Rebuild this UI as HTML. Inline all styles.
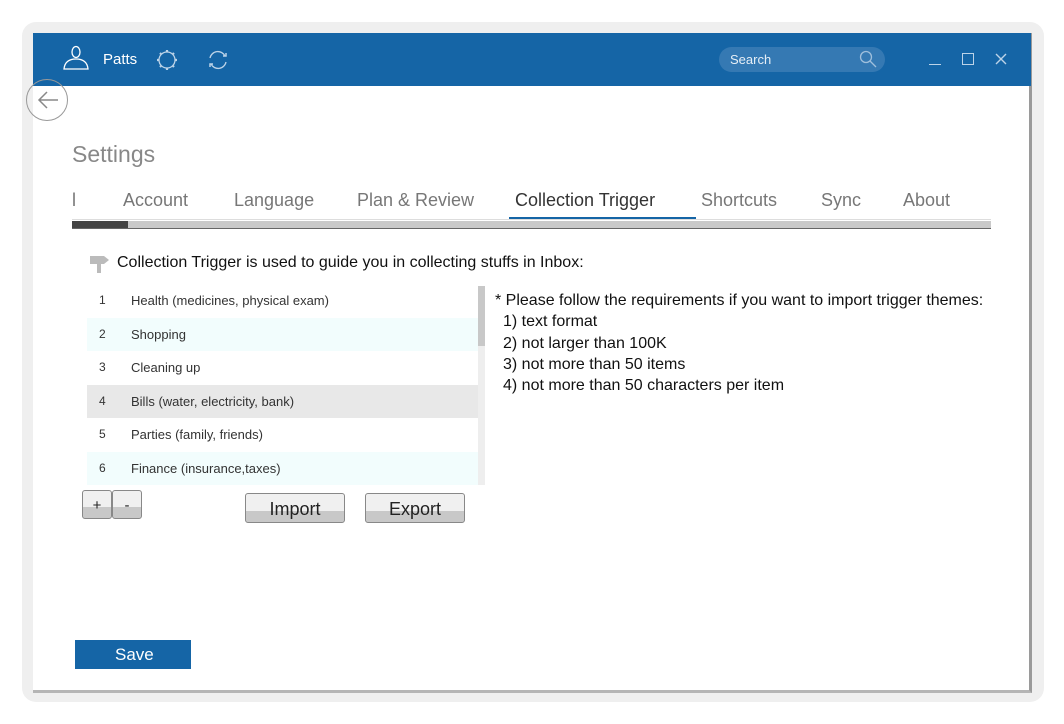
<!DOCTYPE html>
<html><head><style>
body{margin:0;width:1064px;height:724px;background:#fff;position:relative;overflow:hidden;font-family:"Liberation Sans",sans-serif}
.a{position:absolute}
.shadow{left:22px;top:22px;width:1022px;height:680px;background:#efefef;border-radius:14px}
.win{left:33px;top:33px;width:996px;height:657px;background:#fff;border-right:3px solid #9a9a9a;border-bottom:3px solid #b5b5b5}
.hdr{left:33px;top:33px;width:998px;height:53px;background:#1565a6}
.tab{font-size:18px;color:#777;top:190px}
.row{left:87px;width:391px;height:33px;font-size:13px;color:#333}
.row span{position:absolute;top:9px}
.row .n{left:12px;font-size:12px}
.row .t{left:44px}
.btn{border:1px solid #888;border-radius:3px;background:linear-gradient(#f0f0f0 0,#f0f0f0 60%,#c8c8c8 60%);text-align:center;font-size:18px;color:#222}
.req{left:495px;font-size:16px;color:#111}
</style></head><body>
<div class="a shadow"></div>
<div class="a win"></div>
<div class="a hdr"></div>
<svg class="a" style="left:60px;top:44px" width="30" height="28" viewBox="0 0 30 28" fill="none" stroke="#fff" stroke-width="1.3"><ellipse cx="16" cy="8" rx="4" ry="5.5"/><path d="M4 25 Q5 15 16 15 Q27 15 28 25 Z"/></svg>
<div class="a" style="left:103px;top:51px;color:#fff;font-size:15px">Patts</div>
<svg class="a" style="left:154px;top:47px" width="26" height="26" viewBox="0 0 26 26" fill="none" stroke="#bcd3e8" stroke-width="1.3"><circle cx="13" cy="13" r="8"/><g stroke-width="2.2"><path d="M13 3v2M13 21v2M3 13h2M21 13h2M6 6l1 1M19 19l1 1M6 20l1-1M19 7l1-1"/></g></svg>
<svg class="a" style="left:205px;top:47px" width="26" height="26" viewBox="0 0 26 26" fill="none" stroke="#bcd3e8" stroke-width="1.3"><path d="M5 11 A8 8 0 0 1 20 9"/><path d="M21 15 A8 8 0 0 1 6 17"/><path d="M18 9h3v-3M8 17h-3v3" stroke-width="1.5"/></svg>
<div class="a" style="left:719px;top:47px;width:166px;height:25px;border-radius:13px;background:#3579b3"></div>
<div class="a" style="left:730px;top:52px;color:#e6eef6;font-size:13px">Search</div>
<svg class="a" style="left:858px;top:49px" width="20" height="20" viewBox="0 0 20 20" fill="none" stroke="#9fbfdc" stroke-width="1.3"><circle cx="8" cy="8" r="5.5"/><path d="M12 12l6 6"/></svg>
<div class="a" style="left:929px;top:64px;width:12px;height:1px;background:#bcd3e8"></div>
<div class="a" style="left:962px;top:53px;width:10px;height:10px;border:1.3px solid #bcd3e8"></div>
<svg class="a" style="left:995px;top:53px" width="12" height="12" viewBox="0 0 12 12" stroke="#bcd3e8" stroke-width="1.4"><path d="M1 1l10 10M11 1L1 11"/></svg>
<div class="a" style="left:26px;top:79px;width:40px;height:40px;border:1.5px solid #999;border-radius:50%"></div>
<svg class="a" style="left:36px;top:89px" width="24" height="22" viewBox="0 0 24 22" fill="none" stroke="#888" stroke-width="1.5"><path d="M22 11H3M11 3L3 11l8 8"/></svg>
<div class="a" style="left:72px;top:141px;font-size:23px;color:#888">Settings</div>
<div class="a tab" style="left:72px">l</div>
<div class="a tab" style="left:123px">Account</div>
<div class="a tab" style="left:234px">Language</div>
<div class="a tab" style="left:357px">Plan &amp; Review</div>
<div class="a tab" style="left:515px;color:#333">Collection Trigger</div>
<div class="a tab" style="left:701px">Shortcuts</div>
<div class="a tab" style="left:821px">Sync</div>
<div class="a tab" style="left:903px">About</div>
<div class="a" style="left:509px;top:217px;width:187px;height:2px;background:#1565a6"></div>
<div class="a" style="left:72px;top:219px;width:919px;height:1px;background:#ddd"></div>
<div class="a" style="left:72px;top:221px;width:919px;height:7px;background:#c9c9c9;border-bottom:1px solid #666"></div>
<div class="a" style="left:72px;top:221px;width:56px;height:7px;background:#444"></div>
<svg class="a" style="left:86px;top:253px" width="26" height="20" viewBox="0 0 26 20"><path d="M4 3h14l5 4-5 4H4z" fill="#bbb"/><rect x="11" y="11" width="4" height="9" fill="#bbb"/></svg>
<div class="a" style="left:117px;top:254px;font-size:16px;color:#111">Collection Trigger is used to guide you in collecting stuffs in Inbox:</div>
<div class="a row" style="top:284px"><span class="n">1</span><span class="t">Health (medicines, physical exam)</span></div>
<div class="a row" style="top:318px;background:#f2fdfd"><span class="n">2</span><span class="t">Shopping</span></div>
<div class="a row" style="top:351px"><span class="n">3</span><span class="t">Cleaning up</span></div>
<div class="a row" style="top:385px;background:#e8e8e8"><span class="n">4</span><span class="t">Bills (water, electricity, bank)</span></div>
<div class="a row" style="top:418px"><span class="n">5</span><span class="t">Parties (family, friends)</span></div>
<div class="a row" style="top:452px;background:#f2fdfd"><span class="n">6</span><span class="t">Finance (insurance,taxes)</span></div>
<div class="a" style="left:478px;top:286px;width:7px;height:199px;background:#eee"></div>
<div class="a" style="left:478px;top:286px;width:7px;height:60px;background:#c8c8c8"></div>
<div class="a btn" style="left:82px;top:490px;width:28px;height:27px;font-size:15px;line-height:30px">+</div>
<div class="a btn" style="left:112px;top:490px;width:28px;height:27px;font-size:15px;line-height:30px">-</div>
<div class="a btn" style="left:245px;top:493px;width:98px;height:28px;line-height:31px">Import</div>
<div class="a btn" style="left:365px;top:493px;width:98px;height:28px;line-height:31px">Export</div>
<div class="a req" style="top:292px">* Please follow the requirements if you want to import trigger themes:</div>
<div class="a req" style="top:313px;left:503px">1) text format</div>
<div class="a req" style="top:335px;left:503px">2) not larger than 100K</div>
<div class="a req" style="top:356px;left:503px">3) not more than 50 items</div>
<div class="a req" style="top:377px;left:503px">4) not more than 50 characters per item</div>
<div class="a" style="left:75px;top:640px;width:116px;height:29px;background:#1565a6;color:#fff;font-size:17px;line-height:30px;padding-left:40px;box-sizing:border-box">Save</div>
</body></html>
